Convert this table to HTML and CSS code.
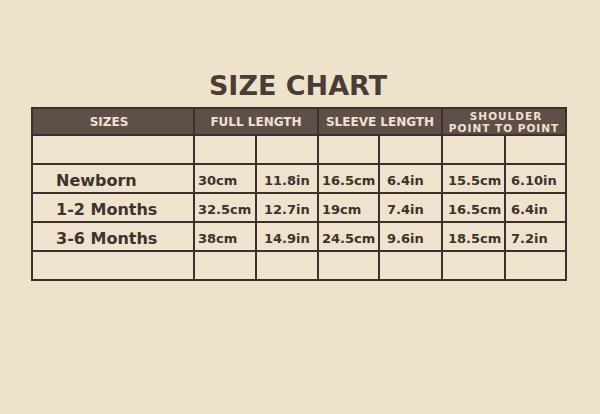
FILE: index.html
```html
<!DOCTYPE html>
<html>
<head>
<meta charset="utf-8">
<link rel="stylesheet" href="styles.css">
</head>
<body>
<div class="page">
  <h1 class="title">SIZE CHART</h1>
  <table class="chart">
    <colgroup>
      <col class="c-size"><col class="c-a"><col class="c-b"><col class="c-c"><col class="c-d"><col class="c-e"><col class="c-f">
    </colgroup>
    <thead>
      <tr>
        <th class="h-sizes">SIZES</th>
        <th colspan="2">FULL LENGTH</th>
        <th colspan="2">SLEEVE LENGTH</th>
        <th colspan="2" class="h-two"><span class="l1">SHOULDER</span><span class="l2">POINT TO POINT</span></th>
      </tr>
    </thead>
    <tbody>
      <tr class="blank"><td></td><td></td><td></td><td></td><td></td><td></td><td></td></tr>
      <tr>
        <td class="size">Newborn</td><td>30cm</td><td class="in">11.8in</td><td>16.5cm</td><td class="in">6.4in</td><td class="sh">15.5cm</td><td class="sh">6.10in</td>
      </tr>
      <tr>
        <td class="size">1-2 Months</td><td>32.5cm</td><td class="in">12.7in</td><td>19cm</td><td class="in">7.4in</td><td class="sh">16.5cm</td><td class="sh">6.4in</td>
      </tr>
      <tr>
        <td class="size">3-6 Months</td><td>38cm</td><td class="in">14.9in</td><td>24.5cm</td><td class="in">9.6in</td><td class="sh">18.5cm</td><td class="sh">7.2in</td>
      </tr>
      <tr class="blank"><td></td><td></td><td></td><td></td><td></td><td></td><td></td></tr>
    </tbody>
  </table>
</div>
</body>
</html>
```

FILE: styles.css
```css
html, body {
  margin: 0;
  padding: 0;
}
body {
  width: 600px;
  height: 414px;
  background: #efe2cb;
  font-family: "DejaVu Sans", sans-serif;
  color: #3d322e;
  overflow: hidden;
}
.page {
  padding: 71px 0 0 31px;
}
.title {
  margin: 0 0 6px 0;
  width: 534px;
  text-align: center;
  font-size: 27px;
  line-height: 30px;
  font-weight: bold;
  letter-spacing: 0;
  color: #4a3c37;
}
.chart {
  border-collapse: collapse;
  table-layout: fixed;
  width: 534px;
  border: 2px solid #3b302d;
}
.c-size { width: 162px; }
.c-a { width: 62px; }
.c-b { width: 62px; }
.c-c { width: 61px; }
.c-d { width: 63px; }
.c-e { width: 63px; }
.c-f { width: 61px; }
.chart th {
  background: #5f4f49;
  color: #f0e2cc;
  font-size: 12px;
  font-weight: bold;
  letter-spacing: 0;
  height: 24px;
  padding: 1px 0 0 0;
  border: 2px solid #3b302d;
  text-align: center;
  vertical-align: middle;
  white-space: nowrap;
}
.chart th.h-sizes {
  padding-right: 8px;
}
.chart th.h-two {
  padding: 0;
}
.h-two .l1,
.h-two .l2 {
  display: block;
  height: 12px;
  font-size: 10.5px;
  line-height: 12px;
  letter-spacing: 1px;
}
.h-two .l1 {
  padding-left: 4px;
}
.chart td {
  height: 24px;
  padding: 3px 0 0 3px;
  border: 2px solid #3b302d;
  font-size: 13px;
  font-weight: bold;
  letter-spacing: 0;
  white-space: nowrap;
  vertical-align: middle;
  background: #f0e3cd;
}
.chart td.in { padding-left: 7px; }
.chart td.sh { padding-left: 5px; }
.chart td.size {
  padding-left: 23px;
  font-size: 16px;
  letter-spacing: 0;
}
```
